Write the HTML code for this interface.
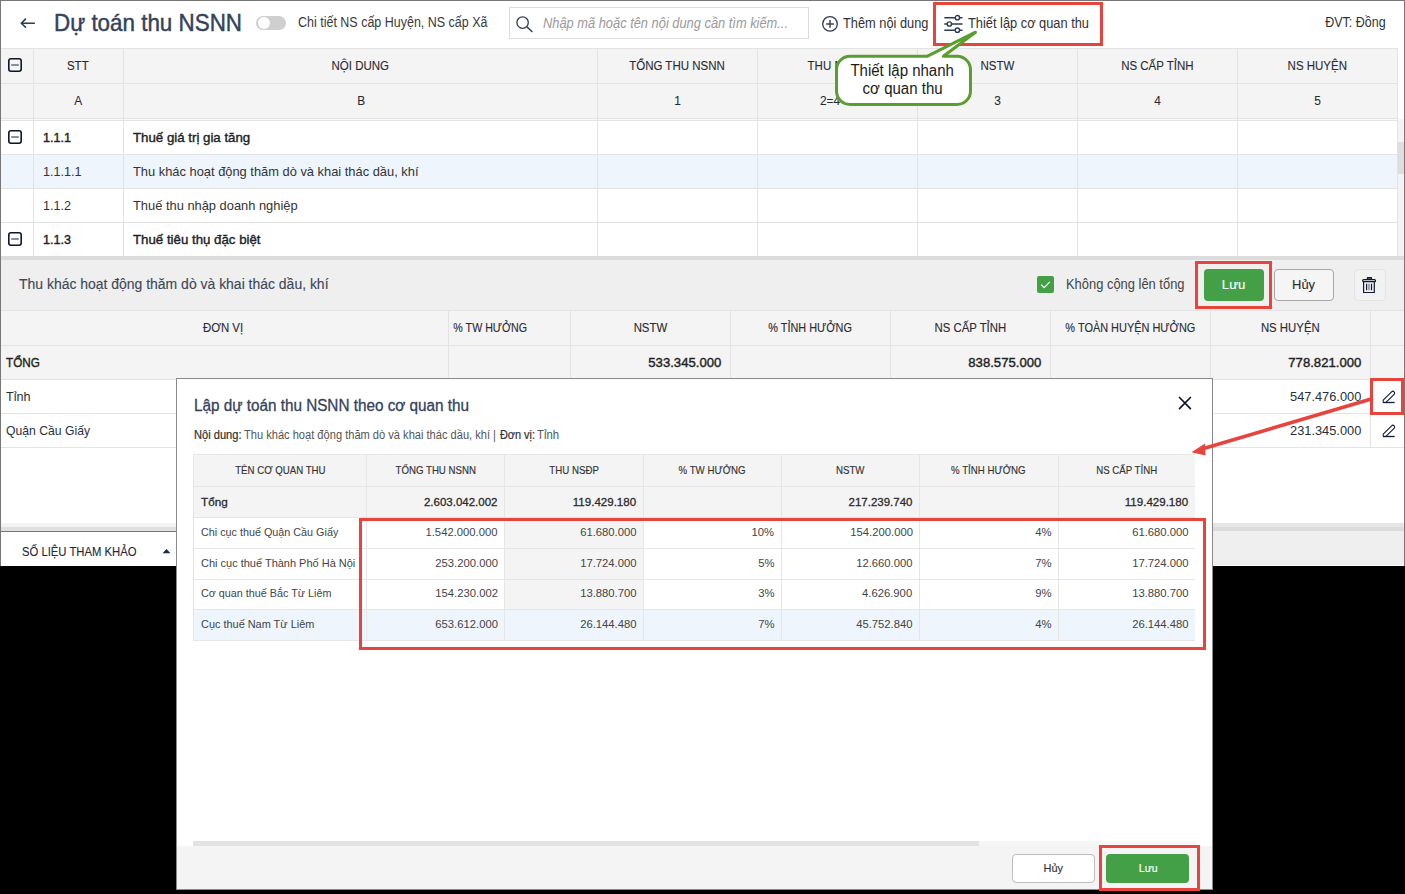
<!DOCTYPE html>
<html><head><meta charset="utf-8"><style>
html,body{margin:0;padding:0;}
body{width:1405px;height:894px;position:relative;overflow:hidden;background:#000;font-family:"Liberation Sans",sans-serif;}
.r{position:absolute;}
.t{position:absolute;white-space:nowrap;}
</style></head><body>
<div class="r" style="left:0px;top:0px;width:1405px;height:894px;background:#000;"></div>
<div class="r" style="left:0px;top:0px;width:1405px;height:566px;background:#fff;"></div>
<div class="r" style="left:0px;top:0px;width:1405px;height:1px;background:#777777;"></div>
<div class="r" style="left:0px;top:0px;width:1px;height:566px;background:#777777;"></div>
<div class="r" style="left:1404px;top:0px;width:1px;height:566px;background:#777777;"></div>
<svg class="r" style="left:18px;top:15px" width="20" height="17" viewBox="0 0 20 17"><path d="M3.4 8.2H16.9M7.9 3.6L3.3 8.2L7.9 12.6" fill="none" stroke="#2d3b55" stroke-width="1.5"/></svg>
<div class="t" style="left:53.50px;top:11.18px;font-size:24px;line-height:24px;color:#34425b;font-weight:normal;font-style:normal;transform:scaleX(0.9331);transform-origin:0 0;-webkit-text-stroke:0.45px #34425b;">Dự toán thu NSNN</div>
<div class="r" style="left:256px;top:16px;width:30px;height:14px;background:#cfcfcf;border-radius:7px;"></div>
<div class="r" style="left:257.5px;top:17px;width:12.0px;height:12px;background:#fff;border-radius:50%;"></div>
<div class="t" style="left:298.40px;top:15.15px;font-size:14px;line-height:14px;color:#3a3a3a;font-weight:normal;font-style:normal;transform:scaleX(0.8920);transform-origin:0 0;">Chi tiết NS cấp Huyện, NS cấp Xã</div>
<div class="r" style="left:509px;top:7px;width:300px;height:32px;background:#fff;border:1px solid #dcdcdc;box-sizing:border-box;"></div>
<svg class="r" style="left:515px;top:15px" width="20" height="18" viewBox="0 0 20 18"><circle cx="7.6" cy="7.6" r="5.7" fill="none" stroke="#2d3b55" stroke-width="1.3"/><path d="M11.8 11.8L17.4 17" stroke="#2d3b55" stroke-width="1.5"/></svg>
<div class="t" style="left:543.00px;top:16.15px;font-size:14px;line-height:14px;color:#9a9a9a;font-weight:normal;font-style:italic;transform:scaleX(0.9179);transform-origin:0 0;">Nhập mã hoặc tên nội dung cần tìm kiếm...</div>
<svg class="r" style="left:821px;top:15px" width="18" height="18" viewBox="0 0 18 18"><circle cx="9" cy="8.9" r="7.3" fill="none" stroke="#2d3b55" stroke-width="1.3"/><path d="M9 5V12.8M5.1 8.9H12.9" stroke="#3a4256" stroke-width="1.5"/></svg>
<div class="t" style="left:842.50px;top:16.15px;font-size:14px;line-height:14px;color:#333;font-weight:normal;font-style:normal;transform:scaleX(0.9155);transform-origin:0 0;">Thêm nội dung</div>
<svg class="r" style="left:943px;top:14px" width="21" height="20" viewBox="0 0 21 20"><g fill="none" stroke="#2d3b55" stroke-width="1.4"><path d="M1.3 3.7H12.2M16.6 3.7H19.5M1.3 10H4.2M8.6 10H19.5M1.3 16.2H12.2M16.6 16.2H19.5"/><circle cx="14.4" cy="3.7" r="2.15"/><circle cx="6.4" cy="10" r="2.15"/><circle cx="14.4" cy="16.2" r="2.15"/></g></svg>
<div class="t" style="left:968.00px;top:16.15px;font-size:14px;line-height:14px;color:#333;font-weight:normal;font-style:normal;transform:scaleX(0.9156);transform-origin:0 0;">Thiết lập cơ quan thu</div>
<div class="t" style="left:1317.80px;top:15.15px;font-size:14px;line-height:14px;color:#333;font-weight:normal;font-style:normal;transform:scaleX(0.8937);transform-origin:100% 0;">ĐVT: Đồng</div>
<div class="r" style="left:1px;top:48px;width:1396px;height:70px;background:#f4f4f4;"></div>
<div class="r" style="left:1px;top:48px;width:1396px;height:1px;background:#e3e3e3;"></div>
<div class="r" style="left:1px;top:83px;width:1396px;height:1px;background:#e3e3e3;"></div>
<div class="r" style="left:1px;top:118px;width:1396px;height:1px;background:#e3e3e3;"></div>
<div class="r" style="left:1px;top:120px;width:1396px;height:1px;background:#e3e3e3;"></div>
<div class="r" style="left:1px;top:119px;width:1396px;height:1px;background:#fafafa;"></div>
<div class="r" style="left:1px;top:154px;width:1396px;height:34px;background:#eef5fd;"></div>
<div class="r" style="left:1px;top:154px;width:1396px;height:1px;background:#e3e3e3;"></div>
<div class="r" style="left:1px;top:188px;width:1396px;height:1px;background:#e3e3e3;"></div>
<div class="r" style="left:1px;top:222px;width:1396px;height:1px;background:#e3e3e3;"></div>
<div class="r" style="left:33px;top:48px;width:1px;height:208px;background:#e3e3e3;"></div>
<div class="r" style="left:123px;top:48px;width:1px;height:208px;background:#e3e3e3;"></div>
<div class="r" style="left:597px;top:48px;width:1px;height:208px;background:#e3e3e3;"></div>
<div class="r" style="left:757px;top:48px;width:1px;height:208px;background:#e3e3e3;"></div>
<div class="r" style="left:917px;top:48px;width:1px;height:208px;background:#e3e3e3;"></div>
<div class="r" style="left:1077px;top:48px;width:1px;height:208px;background:#e3e3e3;"></div>
<div class="r" style="left:1237px;top:48px;width:1px;height:208px;background:#e3e3e3;"></div>
<div class="r" style="left:1397px;top:48px;width:1px;height:208px;background:#e3e3e3;"></div>
<div class="r" style="left:1398px;top:119px;width:6px;height:137px;background:#f4f4f4;"></div>
<div class="r" style="left:1398px;top:142px;width:6px;height:32px;background:#dedede;"></div>
<div class="t" style="left:66.20px;top:60.42px;font-size:12.5px;line-height:12.5px;color:#2a2a33;font-weight:normal;font-style:normal;transform:scaleX(0.9200);transform-origin:50% 0;-webkit-text-stroke:0.12px #2a2a33;">STT</div>
<div class="t" style="left:329.45px;top:60.42px;font-size:12.5px;line-height:12.5px;color:#2a2a33;font-weight:normal;font-style:normal;transform:scaleX(0.9200);transform-origin:50% 0;-webkit-text-stroke:0.12px #2a2a33;">NỘI DUNG</div>
<div class="t" style="left:625.03px;top:60.42px;font-size:12.5px;line-height:12.5px;color:#2a2a33;font-weight:normal;font-style:normal;transform:scaleX(0.9200);transform-origin:50% 0;-webkit-text-stroke:0.12px #2a2a33;">TỔNG THU NSNN</div>
<div class="t" style="left:805.05px;top:60.42px;font-size:12.5px;line-height:12.5px;color:#2a2a33;font-weight:normal;font-style:normal;transform:scaleX(0.9200);transform-origin:50% 0;-webkit-text-stroke:0.12px #2a2a33;">THU NSĐP</div>
<div class="t" style="left:978.60px;top:60.42px;font-size:12.5px;line-height:12.5px;color:#2a2a33;font-weight:normal;font-style:normal;transform:scaleX(0.9200);transform-origin:50% 0;-webkit-text-stroke:0.12px #2a2a33;">NSTW</div>
<div class="t" style="left:1117.64px;top:60.42px;font-size:12.5px;line-height:12.5px;color:#2a2a33;font-weight:normal;font-style:normal;transform:scaleX(0.9200);transform-origin:50% 0;-webkit-text-stroke:0.12px #2a2a33;">NS CẤP TỈNH</div>
<div class="t" style="left:1284.70px;top:60.42px;font-size:12.5px;line-height:12.5px;color:#2a2a33;font-weight:normal;font-style:normal;transform:scaleX(0.9200);transform-origin:50% 0;-webkit-text-stroke:0.12px #2a2a33;">NS HUYỆN</div>
<div class="t" style="left:73.83px;top:95.42px;font-size:12.5px;line-height:12.5px;color:#2a2a33;font-weight:normal;font-style:normal;transform:scaleX(0.9500);transform-origin:50% 0;-webkit-text-stroke:0.08px #2a2a33;">A</div>
<div class="t" style="left:356.53px;top:95.42px;font-size:12.5px;line-height:12.5px;color:#2a2a33;font-weight:normal;font-style:normal;transform:scaleX(0.9500);transform-origin:50% 0;-webkit-text-stroke:0.08px #2a2a33;">B</div>
<div class="t" style="left:673.52px;top:95.42px;font-size:12.5px;line-height:12.5px;color:#2a2a33;font-weight:normal;font-style:normal;transform:scaleX(0.9500);transform-origin:50% 0;-webkit-text-stroke:0.08px #2a2a33;">1</div>
<div class="t" style="left:819.27px;top:95.42px;font-size:12.5px;line-height:12.5px;color:#2a2a33;font-weight:normal;font-style:normal;transform:scaleX(0.9500);transform-origin:50% 0;-webkit-text-stroke:0.08px #2a2a33;">2=4+5</div>
<div class="t" style="left:993.52px;top:95.42px;font-size:12.5px;line-height:12.5px;color:#2a2a33;font-weight:normal;font-style:normal;transform:scaleX(0.9500);transform-origin:50% 0;-webkit-text-stroke:0.08px #2a2a33;">3</div>
<div class="t" style="left:1153.52px;top:95.42px;font-size:12.5px;line-height:12.5px;color:#2a2a33;font-weight:normal;font-style:normal;transform:scaleX(0.9500);transform-origin:50% 0;-webkit-text-stroke:0.08px #2a2a33;">4</div>
<div class="t" style="left:1313.52px;top:95.42px;font-size:12.5px;line-height:12.5px;color:#2a2a33;font-weight:normal;font-style:normal;transform:scaleX(0.9500);transform-origin:50% 0;-webkit-text-stroke:0.08px #2a2a33;">5</div>
<svg class="r" style="left:8px;top:58px" width="14" height="14" viewBox="0 0 14 14"><rect x="0.8" y="0.8" width="12.4" height="12.4" rx="2.2" fill="none" stroke="#0d1430" stroke-width="1.6"/><path d="M3.2 7H10.8" stroke="#6b7389" stroke-width="1.6"/></svg>
<svg class="r" style="left:8px;top:130.3px" width="14" height="14" viewBox="0 0 14 14"><rect x="0.8" y="0.8" width="12.4" height="12.4" rx="2.2" fill="none" stroke="#0d1430" stroke-width="1.6"/><path d="M3.2 7H10.8" stroke="#6b7389" stroke-width="1.6"/></svg>
<svg class="r" style="left:8px;top:232px" width="14" height="14" viewBox="0 0 14 14"><rect x="0.8" y="0.8" width="12.4" height="12.4" rx="2.2" fill="none" stroke="#0d1430" stroke-width="1.6"/><path d="M3.2 7H10.8" stroke="#6b7389" stroke-width="1.6"/></svg>
<div class="t" style="left:42.50px;top:130.99px;font-size:13px;line-height:13px;color:#222;font-weight:normal;font-style:normal;transform:scaleX(0.9700);transform-origin:0 0;-webkit-text-stroke:0.38px #222;">1.1.1</div>
<div class="t" style="left:132.50px;top:130.99px;font-size:13px;line-height:13px;color:#222;font-weight:normal;font-style:normal;transform:scaleX(1.0200);transform-origin:0 0;-webkit-text-stroke:0.38px #222;">Thuế giá trị gia tăng</div>
<div class="t" style="left:42.50px;top:164.99px;font-size:13px;line-height:13px;color:#333;font-weight:normal;font-style:normal;transform:scaleX(0.9700);transform-origin:0 0;">1.1.1.1</div>
<div class="t" style="left:132.50px;top:164.99px;font-size:13px;line-height:13px;color:#333;font-weight:normal;font-style:normal;transform:scaleX(0.9900);transform-origin:0 0;">Thu khác hoạt động thăm dò và khai thác dầu, khí</div>
<div class="t" style="left:42.50px;top:198.99px;font-size:13px;line-height:13px;color:#333;font-weight:normal;font-style:normal;transform:scaleX(0.9700);transform-origin:0 0;">1.1.2</div>
<div class="t" style="left:132.50px;top:198.99px;font-size:13px;line-height:13px;color:#333;font-weight:normal;font-style:normal;transform:scaleX(0.9900);transform-origin:0 0;">Thuế thu nhập doanh nghiệp</div>
<div class="t" style="left:42.50px;top:232.99px;font-size:13px;line-height:13px;color:#222;font-weight:normal;font-style:normal;transform:scaleX(0.9700);transform-origin:0 0;-webkit-text-stroke:0.38px #222;">1.1.3</div>
<div class="t" style="left:132.50px;top:232.99px;font-size:13px;line-height:13px;color:#222;font-weight:normal;font-style:normal;transform:scaleX(1.0200);transform-origin:0 0;-webkit-text-stroke:0.38px #222;">Thuế tiêu thụ đặc biệt</div>
<div class="r" style="left:1px;top:256px;width:1403px;height:4px;background:#dcdcdc;"></div>
<div class="r" style="left:1px;top:260px;width:1403px;height:50px;background:#efefef;"></div>
<div class="r" style="left:1px;top:310px;width:1403px;height:1px;background:#e3e3e3;"></div>
<div class="t" style="left:18.80px;top:277.15px;font-size:14px;line-height:14px;color:#3d4758;font-weight:normal;font-style:normal;transform:scaleX(0.9967);transform-origin:0 0;-webkit-text-stroke:0.12px #3d4758;">Thu khác hoạt động thăm dò và khai thác dầu, khí</div>
<div class="r" style="left:1037px;top:276px;width:17px;height:17px;background:#43a047;border-radius:2px;"></div>
<svg class="r" style="left:1037px;top:276px" width="17" height="17" viewBox="0 0 17 17"><path d="M4.2 8.7L7.2 11.6L12.8 5.9" fill="none" stroke="#fff" stroke-width="1.15"/></svg>
<div class="t" style="left:1065.50px;top:277.15px;font-size:14px;line-height:14px;color:#444;font-weight:normal;font-style:normal;transform:scaleX(0.9226);transform-origin:0 0;">Không cộng lên tổng</div>
<div class="r" style="left:1204px;top:269px;width:60px;height:32px;background:#43a047;border-radius:4px;"></div>
<div class="t" style="left:1222.42px;top:278.29px;font-size:13px;line-height:13px;color:#fff;font-weight:normal;font-style:normal;transform:scaleX(1.0145);transform-origin:50% 0;-webkit-text-stroke:0.15px #fff;">Lưu</div>
<div class="r" style="left:1274px;top:269px;width:60px;height:32px;background:#f5f5f5;border:1px solid #a8a8a8;box-sizing:border-box;border-radius:4px;"></div>
<div class="t" style="left:1292.44px;top:278.29px;font-size:13px;line-height:13px;color:#2b2b33;font-weight:normal;font-style:normal;transform:scaleX(0.9949);transform-origin:50% 0;-webkit-text-stroke:0.1px #2b2b33;">Hủy</div>
<div class="r" style="left:1354px;top:269px;width:32px;height:32px;background:#f2f2f2;border:1px solid #e4e4e4;box-sizing:border-box;border-radius:4px;"></div>
<svg class="r" style="left:1360px;top:275px" width="18" height="20" viewBox="0 0 18 20"><g fill="none" stroke="#101a36" stroke-width="1.2"><rect x="7.3" y="2.6" width="4.3" height="1.6" rx="0.6"/><rect x="2.7" y="4.7" width="12.8" height="1.9" rx="0.9"/><path d="M3.6 6.6V17.5H14.3V6.6"/><path d="M6.6 8.7V15.2M11.5 8.7V15.2"/><path d="M9 8.7V15.2" stroke="#6b7389"/></g></svg>
<div class="r" style="left:1px;top:311px;width:1403px;height:68px;background:#f4f4f4;"></div>
<div class="r" style="left:1px;top:345px;width:1403px;height:1px;background:#e3e3e3;"></div>
<div class="r" style="left:1px;top:379px;width:1403px;height:1px;background:#e3e3e3;"></div>
<div class="r" style="left:1px;top:413px;width:1403px;height:1px;background:#e3e3e3;"></div>
<div class="r" style="left:1px;top:447px;width:1403px;height:1px;background:#e3e3e3;"></div>
<div class="r" style="left:448px;top:311px;width:1px;height:136px;background:#e3e3e3;"></div>
<div class="r" style="left:570px;top:311px;width:1px;height:136px;background:#e3e3e3;"></div>
<div class="r" style="left:730px;top:311px;width:1px;height:136px;background:#e3e3e3;"></div>
<div class="r" style="left:890px;top:311px;width:1px;height:136px;background:#e3e3e3;"></div>
<div class="r" style="left:1050px;top:311px;width:1px;height:136px;background:#e3e3e3;"></div>
<div class="r" style="left:1210px;top:311px;width:1px;height:136px;background:#e3e3e3;"></div>
<div class="r" style="left:1370px;top:311px;width:1px;height:136px;background:#e3e3e3;"></div>
<div class="t" style="left:200.97px;top:321.92px;font-size:12.5px;line-height:12.5px;color:#2a2a33;font-weight:normal;font-style:normal;transform:scaleX(0.9100);transform-origin:50% 0;-webkit-text-stroke:0.12px #2a2a33;">ĐƠN VỊ</div>
<div class="t" style="left:446.78px;top:321.92px;font-size:12.5px;line-height:12.5px;color:#2a2a33;font-weight:normal;font-style:normal;transform:scaleX(0.8526);transform-origin:50% 0;-webkit-text-stroke:0.12px #2a2a33;">% TW HƯỞNG</div>
<div class="t" style="left:631.60px;top:321.92px;font-size:12.5px;line-height:12.5px;color:#2a2a33;font-weight:normal;font-style:normal;transform:scaleX(0.9100);transform-origin:50% 0;-webkit-text-stroke:0.12px #2a2a33;">NSTW</div>
<div class="t" style="left:761.92px;top:321.92px;font-size:12.5px;line-height:12.5px;color:#2a2a33;font-weight:normal;font-style:normal;transform:scaleX(0.8693);transform-origin:50% 0;-webkit-text-stroke:0.12px #2a2a33;">% TỈNH HƯỞNG</div>
<div class="t" style="left:930.64px;top:321.92px;font-size:12.5px;line-height:12.5px;color:#2a2a33;font-weight:normal;font-style:normal;transform:scaleX(0.9100);transform-origin:50% 0;-webkit-text-stroke:0.12px #2a2a33;">NS CẤP TỈNH</div>
<div class="t" style="left:1055.63px;top:321.92px;font-size:12.5px;line-height:12.5px;color:#2a2a33;font-weight:normal;font-style:normal;transform:scaleX(0.8741);transform-origin:50% 0;-webkit-text-stroke:0.12px #2a2a33;">% TOÀN HUYỆN HƯỞNG</div>
<div class="t" style="left:1257.70px;top:321.92px;font-size:12.5px;line-height:12.5px;color:#2a2a33;font-weight:normal;font-style:normal;transform:scaleX(0.9100);transform-origin:50% 0;-webkit-text-stroke:0.12px #2a2a33;">NS HUYỆN</div>
<div class="t" style="left:6.40px;top:355.99px;font-size:13px;line-height:13px;color:#222;font-weight:normal;font-style:normal;transform:scaleX(0.9001);transform-origin:0 0;-webkit-text-stroke:0.38px #222;">TỔNG</div>
<div class="t" style="left:648.70px;top:355.99px;font-size:13px;line-height:13px;color:#222;font-weight:normal;font-style:normal;transform:scaleX(1.0097);transform-origin:100% 0;-webkit-text-stroke:0.38px #222;">533.345.000</div>
<div class="t" style="left:968.70px;top:355.99px;font-size:13px;line-height:13px;color:#222;font-weight:normal;font-style:normal;transform:scaleX(1.0097);transform-origin:100% 0;-webkit-text-stroke:0.38px #222;">838.575.000</div>
<div class="t" style="left:1288.70px;top:355.99px;font-size:13px;line-height:13px;color:#222;font-weight:normal;font-style:normal;transform:scaleX(1.0097);transform-origin:100% 0;-webkit-text-stroke:0.38px #222;">778.821.000</div>
<div class="t" style="left:6.00px;top:389.99px;font-size:13px;line-height:13px;color:#2b2f3a;font-weight:normal;font-style:normal;transform:scaleX(0.9727);transform-origin:0 0;">Tỉnh</div>
<div class="t" style="left:6.00px;top:423.99px;font-size:13px;line-height:13px;color:#2b2f3a;font-weight:normal;font-style:normal;transform:scaleX(0.9375);transform-origin:0 0;">Quận Cầu Giấy</div>
<div class="t" style="left:1288.70px;top:389.99px;font-size:13px;line-height:13px;color:#2b2f3a;font-weight:normal;font-style:normal;transform:scaleX(0.9862);transform-origin:100% 0;">547.476.000</div>
<div class="t" style="left:1288.70px;top:423.99px;font-size:13px;line-height:13px;color:#2b2f3a;font-weight:normal;font-style:normal;transform:scaleX(0.9862);transform-origin:100% 0;">231.345.000</div>
<svg class="r" style="left:1380px;top:388px" width="17" height="17" viewBox="0 0 17 17"><g fill="none" stroke="#101a36" stroke-width="1.1" stroke-linejoin="round"><path d="M3.2 14.4V12.2L11.6 3.8A1.75 1.75 0 0 1 14.1 6.3L5.9 14.4"/><path d="M3 14.5H14.6" stroke-width="1.3"/></g></svg>
<svg class="r" style="left:1380px;top:422px" width="17" height="17" viewBox="0 0 17 17"><g fill="none" stroke="#101a36" stroke-width="1.1" stroke-linejoin="round"><path d="M3.2 14.4V12.2L11.6 3.8A1.75 1.75 0 0 1 14.1 6.3L5.9 14.4"/><path d="M3 14.5H14.6" stroke-width="1.3"/></g></svg>
<div class="r" style="left:1px;top:523px;width:1403px;height:4px;background:#e6e6e6;"></div>
<div class="r" style="left:1px;top:527px;width:1403px;height:4px;background:#dcdcdc;"></div>
<div class="r" style="left:1px;top:523px;width:175px;height:4px;background:#f3f3f3;"></div>
<div class="r" style="left:1px;top:527px;width:175px;height:4px;background:#e0e0e0;"></div>
<div class="r" style="left:1px;top:531px;width:1403px;height:34px;background:#efefef;"></div>
<div class="r" style="left:1px;top:565px;width:1403px;height:1px;background:#f8f8f8;"></div>
<div class="r" style="left:1px;top:531px;width:179px;height:35px;background:#fff;"></div>
<div class="r" style="left:1px;top:530.5px;width:179px;height:1.5px;background:#2eaa3c;"></div>
<div class="t" style="left:22.30px;top:545.92px;font-size:12.5px;line-height:12.5px;color:#25253a;font-weight:normal;font-style:normal;transform:scaleX(0.9024);transform-origin:0 0;-webkit-text-stroke:0.1px #25253a;">SỐ LIỆU THAM KHẢO</div>
<svg class="r" style="left:161px;top:548px" width="11" height="7" viewBox="0 0 11 7"><path d="M1.5 5.3L5.5 1L9.5 5.3Z" fill="#1f2a44"/></svg>
<div class="r" style="left:176px;top:378px;width:1037px;height:512px;background:#fff;border:1px solid #8a8a8a;box-sizing:border-box;"></div>
<div class="t" style="left:193.70px;top:398.45px;font-size:16px;line-height:16px;color:#34425b;font-weight:normal;font-style:normal;transform:scaleX(0.9547);transform-origin:0 0;-webkit-text-stroke:0.3px #34425b;">Lập dự toán thu NSNN theo cơ quan thu</div>
<svg class="r" style="left:1177px;top:395px" width="16" height="16" viewBox="0 0 16 16"><path d="M2.5 2.5L13.4 13.6M13.4 2.5L2.5 13.6" stroke="#0d1430" stroke-width="1.7" stroke-linecap="round"/></svg>
<div class="t" style="left:193.70px;top:428.84px;font-size:12px;line-height:12px;color:#333;font-weight:normal;font-style:normal;transform:scaleX(0.9247);transform-origin:0 0;-webkit-text-stroke:0.22px #333;">Nội dung:</div>
<div class="t" style="left:244.00px;top:428.84px;font-size:12px;line-height:12px;color:#555;font-weight:normal;font-style:normal;transform:scaleX(0.9243);transform-origin:0 0;">Thu khác hoạt động thăm dò và khai thác dầu, khí |</div>
<div class="t" style="left:500.00px;top:428.84px;font-size:12px;line-height:12px;color:#333;font-weight:normal;font-style:normal;transform:scaleX(0.9081);transform-origin:0 0;-webkit-text-stroke:0.22px #333;">Đơn vị:</div>
<div class="t" style="left:537.00px;top:428.84px;font-size:12px;line-height:12px;color:#555;font-weight:normal;font-style:normal;transform:scaleX(0.9424);transform-origin:0 0;">Tỉnh</div>
<div class="r" style="left:193px;top:454px;width:1002px;height:63px;background:#f4f4f4;"></div>
<div class="r" style="left:504px;top:518px;width:139px;height:91px;background:#f4f4f4;"></div>
<div class="r" style="left:193px;top:609px;width:1002px;height:31px;background:#eef5fd;"></div>
<div class="r" style="left:193px;top:454px;width:1002px;height:1px;background:#e6e6e6;"></div>
<div class="r" style="left:193px;top:486px;width:1002px;height:1px;background:#e6e6e6;"></div>
<div class="r" style="left:193px;top:517px;width:1002px;height:1px;background:#e6e6e6;"></div>
<div class="r" style="left:193px;top:548px;width:1002px;height:1px;background:#e6e6e6;"></div>
<div class="r" style="left:193px;top:579px;width:1002px;height:1px;background:#e6e6e6;"></div>
<div class="r" style="left:193px;top:609px;width:1002px;height:1px;background:#e6e6e6;"></div>
<div class="r" style="left:193px;top:640px;width:1002px;height:1px;background:#e6e6e6;"></div>
<div class="r" style="left:193px;top:454px;width:1px;height:187px;background:#e6e6e6;"></div>
<div class="r" style="left:366px;top:454px;width:1px;height:187px;background:#e6e6e6;"></div>
<div class="r" style="left:504px;top:454px;width:1px;height:187px;background:#e6e6e6;"></div>
<div class="r" style="left:643px;top:454px;width:1px;height:187px;background:#e6e6e6;"></div>
<div class="r" style="left:781px;top:454px;width:1px;height:187px;background:#e6e6e6;"></div>
<div class="r" style="left:919px;top:454px;width:1px;height:187px;background:#e6e6e6;"></div>
<div class="r" style="left:1058px;top:454px;width:1px;height:187px;background:#e6e6e6;"></div>
<div class="t" style="left:229.33px;top:465.19px;font-size:11px;line-height:11px;color:#333;font-weight:normal;font-style:normal;transform:scaleX(0.8800);transform-origin:50% 0;-webkit-text-stroke:0.15px #333;">TÊN CƠ QUAN THU</div>
<div class="t" style="left:389.57px;top:465.19px;font-size:11px;line-height:11px;color:#333;font-weight:normal;font-style:normal;transform:scaleX(0.8800);transform-origin:50% 0;-webkit-text-stroke:0.15px #333;">TỔNG THU NSNN</div>
<div class="t" style="left:545.69px;top:465.19px;font-size:11px;line-height:11px;color:#333;font-weight:normal;font-style:normal;transform:scaleX(0.8800);transform-origin:50% 0;-webkit-text-stroke:0.15px #333;">THU NSĐP</div>
<div class="t" style="left:674.27px;top:465.19px;font-size:11px;line-height:11px;color:#333;font-weight:normal;font-style:normal;transform:scaleX(0.8800);transform-origin:50% 0;-webkit-text-stroke:0.15px #333;">% TW HƯỞNG</div>
<div class="t" style="left:834.11px;top:465.19px;font-size:11px;line-height:11px;color:#333;font-weight:normal;font-style:normal;transform:scaleX(0.8800);transform-origin:50% 0;-webkit-text-stroke:0.15px #333;">NSTW</div>
<div class="t" style="left:946.49px;top:465.19px;font-size:11px;line-height:11px;color:#333;font-weight:normal;font-style:normal;transform:scaleX(0.8800);transform-origin:50% 0;-webkit-text-stroke:0.15px #333;">% TỈNH HƯỞNG</div>
<div class="t" style="left:1092.16px;top:465.19px;font-size:11px;line-height:11px;color:#333;font-weight:normal;font-style:normal;transform:scaleX(0.8800);transform-origin:50% 0;-webkit-text-stroke:0.15px #333;">NS CẤP TỈNH</div>
<div class="t" style="left:201.40px;top:497.26px;font-size:11.5px;line-height:11.5px;color:#2a2a2a;font-weight:normal;font-style:normal;transform:scaleX(1.0184);transform-origin:0 0;-webkit-text-stroke:0.28px #2a2a2a;">Tổng</div>
<div class="t" style="left:423.96px;top:497.26px;font-size:11.5px;line-height:11.5px;color:#2a2a2a;font-weight:normal;font-style:normal;-webkit-text-stroke:0.28px #2a2a2a;">2.603.042.002</div>
<div class="t" style="left:573.40px;top:497.26px;font-size:11.5px;line-height:11.5px;color:#2a2a2a;font-weight:normal;font-style:normal;transform:scaleX(1.0035);transform-origin:100% 0;-webkit-text-stroke:0.28px #2a2a2a;">119.429.180</div>
<div class="t" style="left:848.55px;top:497.26px;font-size:11.5px;line-height:11.5px;color:#2a2a2a;font-weight:normal;font-style:normal;-webkit-text-stroke:0.28px #2a2a2a;">217.239.740</div>
<div class="t" style="left:1125.40px;top:497.26px;font-size:11.5px;line-height:11.5px;color:#2a2a2a;font-weight:normal;font-style:normal;transform:scaleX(1.0035);transform-origin:100% 0;-webkit-text-stroke:0.28px #2a2a2a;">119.429.180</div>
<div class="t" style="left:201.40px;top:526.76px;font-size:11.5px;line-height:11.5px;color:#444;font-weight:normal;font-style:normal;transform:scaleX(0.9379);transform-origin:0 0;">Chi cục thuế Quận Cầu Giấy</div>
<div class="t" style="left:423.96px;top:526.76px;font-size:11.5px;line-height:11.5px;color:#444;font-weight:normal;font-style:normal;transform:scaleX(0.9800);transform-origin:100% 0;">1.542.000.000</div>
<div class="t" style="left:578.94px;top:526.76px;font-size:11.5px;line-height:11.5px;color:#444;font-weight:normal;font-style:normal;transform:scaleX(0.9800);transform-origin:100% 0;">61.680.000</div>
<div class="t" style="left:751.48px;top:526.76px;font-size:11.5px;line-height:11.5px;color:#444;font-weight:normal;font-style:normal;transform:scaleX(0.9800);transform-origin:100% 0;">10%</div>
<div class="t" style="left:848.55px;top:526.76px;font-size:11.5px;line-height:11.5px;color:#444;font-weight:normal;font-style:normal;transform:scaleX(0.9800);transform-origin:100% 0;">154.200.000</div>
<div class="t" style="left:1034.88px;top:526.76px;font-size:11.5px;line-height:11.5px;color:#444;font-weight:normal;font-style:normal;transform:scaleX(0.9800);transform-origin:100% 0;">4%</div>
<div class="t" style="left:1130.94px;top:526.76px;font-size:11.5px;line-height:11.5px;color:#444;font-weight:normal;font-style:normal;transform:scaleX(0.9800);transform-origin:100% 0;">61.680.000</div>
<div class="t" style="left:201.40px;top:557.56px;font-size:11.5px;line-height:11.5px;color:#444;font-weight:normal;font-style:normal;transform:scaleX(0.9553);transform-origin:0 0;">Chi cục thuế Thành Phố Hà Nội</div>
<div class="t" style="left:433.55px;top:557.56px;font-size:11.5px;line-height:11.5px;color:#444;font-weight:normal;font-style:normal;transform:scaleX(0.9800);transform-origin:100% 0;">253.200.000</div>
<div class="t" style="left:578.94px;top:557.56px;font-size:11.5px;line-height:11.5px;color:#444;font-weight:normal;font-style:normal;transform:scaleX(0.9800);transform-origin:100% 0;">17.724.000</div>
<div class="t" style="left:757.88px;top:557.56px;font-size:11.5px;line-height:11.5px;color:#444;font-weight:normal;font-style:normal;transform:scaleX(0.9800);transform-origin:100% 0;">5%</div>
<div class="t" style="left:854.94px;top:557.56px;font-size:11.5px;line-height:11.5px;color:#444;font-weight:normal;font-style:normal;transform:scaleX(0.9800);transform-origin:100% 0;">12.660.000</div>
<div class="t" style="left:1034.88px;top:557.56px;font-size:11.5px;line-height:11.5px;color:#444;font-weight:normal;font-style:normal;transform:scaleX(0.9800);transform-origin:100% 0;">7%</div>
<div class="t" style="left:1130.94px;top:557.56px;font-size:11.5px;line-height:11.5px;color:#444;font-weight:normal;font-style:normal;transform:scaleX(0.9800);transform-origin:100% 0;">17.724.000</div>
<div class="t" style="left:201.40px;top:588.26px;font-size:11.5px;line-height:11.5px;color:#444;font-weight:normal;font-style:normal;transform:scaleX(0.9378);transform-origin:0 0;">Cơ quan thuế Bắc Từ Liêm</div>
<div class="t" style="left:433.55px;top:588.26px;font-size:11.5px;line-height:11.5px;color:#444;font-weight:normal;font-style:normal;transform:scaleX(0.9800);transform-origin:100% 0;">154.230.002</div>
<div class="t" style="left:578.94px;top:588.26px;font-size:11.5px;line-height:11.5px;color:#444;font-weight:normal;font-style:normal;transform:scaleX(0.9800);transform-origin:100% 0;">13.880.700</div>
<div class="t" style="left:757.88px;top:588.26px;font-size:11.5px;line-height:11.5px;color:#444;font-weight:normal;font-style:normal;transform:scaleX(0.9800);transform-origin:100% 0;">3%</div>
<div class="t" style="left:861.34px;top:588.26px;font-size:11.5px;line-height:11.5px;color:#444;font-weight:normal;font-style:normal;transform:scaleX(0.9800);transform-origin:100% 0;">4.626.900</div>
<div class="t" style="left:1034.88px;top:588.26px;font-size:11.5px;line-height:11.5px;color:#444;font-weight:normal;font-style:normal;transform:scaleX(0.9800);transform-origin:100% 0;">9%</div>
<div class="t" style="left:1130.94px;top:588.26px;font-size:11.5px;line-height:11.5px;color:#444;font-weight:normal;font-style:normal;transform:scaleX(0.9800);transform-origin:100% 0;">13.880.700</div>
<div class="t" style="left:201.40px;top:618.96px;font-size:11.5px;line-height:11.5px;color:#444;font-weight:normal;font-style:normal;transform:scaleX(0.9494);transform-origin:0 0;">Cục thuế Nam Từ Liêm</div>
<div class="t" style="left:433.55px;top:618.96px;font-size:11.5px;line-height:11.5px;color:#444;font-weight:normal;font-style:normal;transform:scaleX(0.9800);transform-origin:100% 0;">653.612.000</div>
<div class="t" style="left:578.94px;top:618.96px;font-size:11.5px;line-height:11.5px;color:#444;font-weight:normal;font-style:normal;transform:scaleX(0.9800);transform-origin:100% 0;">26.144.480</div>
<div class="t" style="left:757.88px;top:618.96px;font-size:11.5px;line-height:11.5px;color:#444;font-weight:normal;font-style:normal;transform:scaleX(0.9800);transform-origin:100% 0;">7%</div>
<div class="t" style="left:854.94px;top:618.96px;font-size:11.5px;line-height:11.5px;color:#444;font-weight:normal;font-style:normal;transform:scaleX(0.9800);transform-origin:100% 0;">45.752.840</div>
<div class="t" style="left:1034.88px;top:618.96px;font-size:11.5px;line-height:11.5px;color:#444;font-weight:normal;font-style:normal;transform:scaleX(0.9800);transform-origin:100% 0;">4%</div>
<div class="t" style="left:1130.94px;top:618.96px;font-size:11.5px;line-height:11.5px;color:#444;font-weight:normal;font-style:normal;transform:scaleX(0.9800);transform-origin:100% 0;">26.144.480</div>
<div class="r" style="left:193px;top:841px;width:1003px;height:5px;background:#f6f6f6;"></div>
<div class="r" style="left:193px;top:841px;width:786px;height:5px;background:#e2e2e2;"></div>
<div class="r" style="left:177px;top:846px;width:1035px;height:43px;background:#f4f4f4;"></div>
<div class="r" style="left:1012px;top:854px;width:83px;height:29px;background:#fff;border:1px solid #bdbdbd;box-sizing:border-box;border-radius:4px;"></div>
<div class="t" style="left:1043.07px;top:862.56px;font-size:11.5px;line-height:11.5px;color:#333;font-weight:normal;font-style:normal;transform:scaleX(0.9584);transform-origin:50% 0;-webkit-text-stroke:0.15px #333;">Hủy</div>
<div class="r" style="left:1106px;top:854px;width:83px;height:29px;background:#43a047;border-radius:4px;"></div>
<div class="t" style="left:1137.55px;top:862.56px;font-size:11.5px;line-height:11.5px;color:#fff;font-weight:normal;font-style:normal;transform:scaleX(0.9175);transform-origin:50% 0;-webkit-text-stroke:0.2px #fff;">Lưu</div>
<div class="r" style="left:933px;top:2px;width:170px;height:44px;border:3px solid #e6443d;box-sizing:border-box;"></div>
<div class="r" style="left:1195px;top:261px;width:77px;height:48px;border:3px solid #e6443d;box-sizing:border-box;"></div>
<div class="r" style="left:1370px;top:378px;width:34px;height:37px;border:3px solid #e6443d;box-sizing:border-box;"></div>
<div class="r" style="left:359px;top:518px;width:847px;height:132px;border:3px solid #e6443d;box-sizing:border-box;"></div>
<div class="r" style="left:1099px;top:845px;width:101px;height:46px;border:3px solid #e6443d;box-sizing:border-box;"></div>
<svg class="r" style="left:0;top:0" width="1405" height="894" viewBox="0 0 1405 894"><path d="M1373 398.5L1202 449" stroke="#e6443d" stroke-width="3.6"/><path d="M1191.5 452.3L1205 443.5L1205.5 455.5Z" fill="#e6443d"/></svg>
<svg class="r" style="left:0;top:0" width="1405" height="894" viewBox="0 0 1405 894"><path d="M851 56.3H927L975.5 32.2L943.4 56.3H957A13.5 13.5 0 0 1 970.5 69.8V91A13.5 13.5 0 0 1 957 104.5H850A13.5 13.5 0 0 1 836.5 91V69.8A13.5 13.5 0 0 1 850 56.3Z" fill="#fff" stroke="#5c9e2e" stroke-width="3" stroke-linejoin="round"/></svg>
<div class="t" style="left:846.85px;top:63.25px;font-size:16px;line-height:16px;color:#1a1a1a;font-weight:normal;font-style:normal;transform:scaleX(0.9383);transform-origin:50% 0;">Thiết lập nhanh</div>
<div class="t" style="left:859.89px;top:81.05px;font-size:16px;line-height:16px;color:#1a1a1a;font-weight:normal;font-style:normal;transform:scaleX(0.9387);transform-origin:50% 0;">cơ quan thu</div>
</body></html>
